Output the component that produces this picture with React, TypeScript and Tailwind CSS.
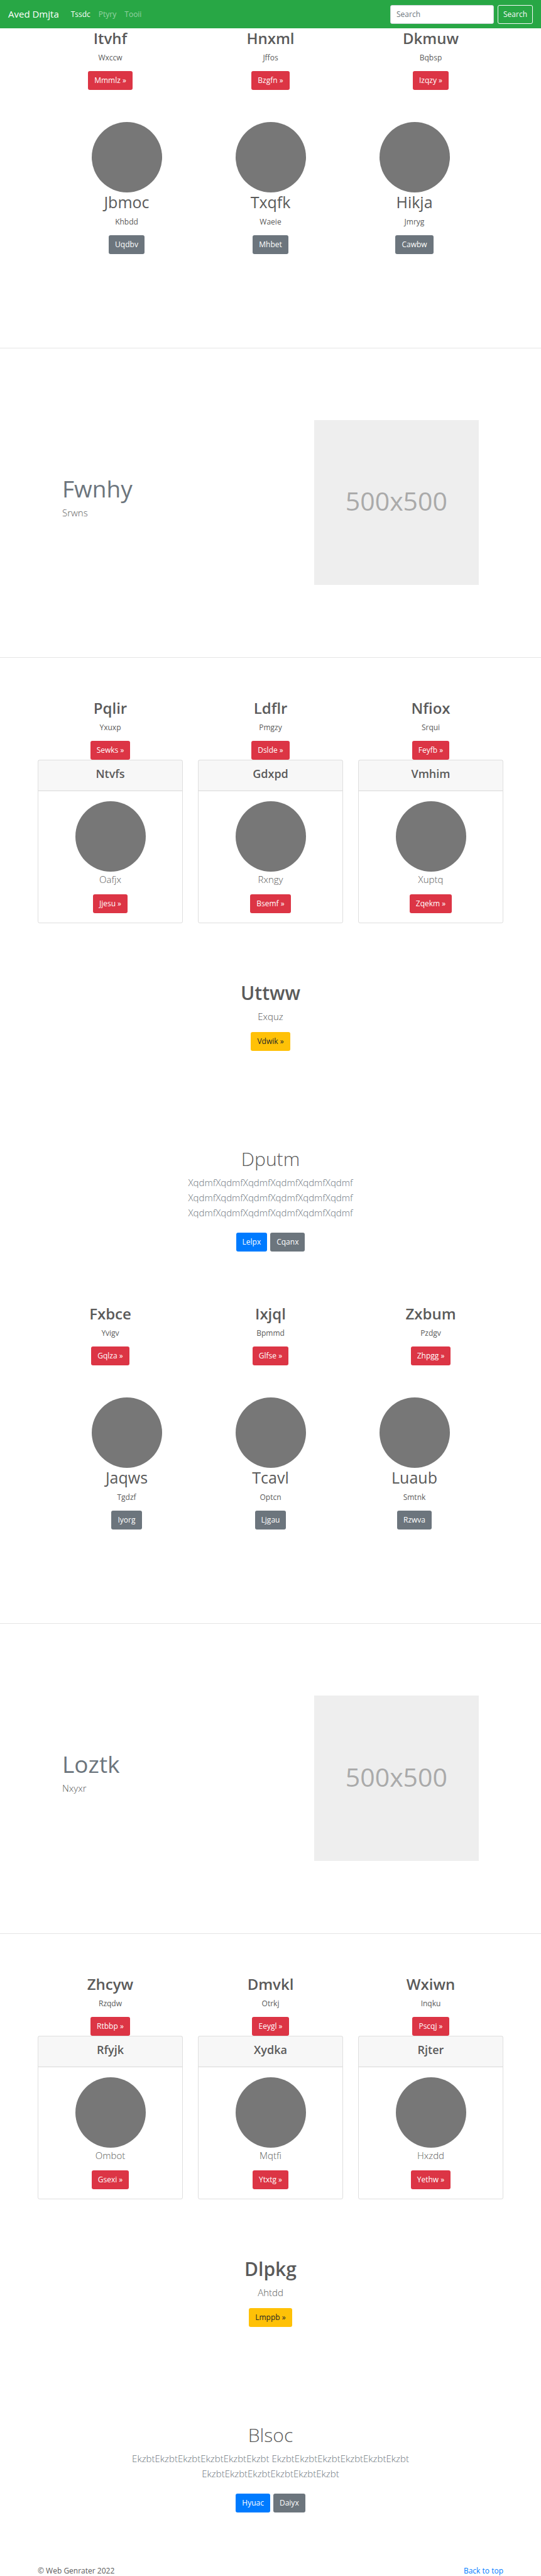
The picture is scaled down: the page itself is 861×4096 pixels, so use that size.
import React from "react";

type Item = { title: string; text: string; action: string };
type Block = {
  marketing: Item[];
  people: Item[];
  feature: { title: string; text: string };
  offers: Item[];
  cards: Item[];
  banner: Item;
  album: { title: string; text: string; primary: string; secondary: string };
};

const repeat = (word: string) => Array(3).fill(word.repeat(6)).join(" ");

const blocks: Block[] = [
  {
    marketing: [
      { title: "Itvhf", text: "Wxccw", action: "Mmmlz" },
      { title: "Hnxml", text: "Jffos", action: "Bzgfn" },
      { title: "Dkmuw", text: "Bqbsp", action: "Izqzy" },
    ],
    people: [
      { title: "Jbmoc", text: "Khbdd", action: "Uqdbv" },
      { title: "Txqfk", text: "Waeie", action: "Mhbet" },
      { title: "Hikja", text: "Jmryg", action: "Cawbw" },
    ],
    feature: { title: "Fwnhy", text: "Srwns" },
    offers: [
      { title: "Pqlir", text: "Yxuxp", action: "Sewks" },
      { title: "Ldflr", text: "Pmgzy", action: "Dslde" },
      { title: "Nfiox", text: "Srqui", action: "Feyfb" },
    ],
    cards: [
      { title: "Ntvfs", text: "Oafjx", action: "Jjesu" },
      { title: "Gdxpd", text: "Rxngy", action: "Bsemf" },
      { title: "Vmhim", text: "Xuptq", action: "Zqekm" },
    ],
    banner: { title: "Uttww", text: "Exquz", action: "Vdwik" },
    album: { title: "Dputm", text: repeat("Xqdmf"), primary: "Lelpx", secondary: "Cqanx" },
  },
  {
    marketing: [
      { title: "Fxbce", text: "Yvigv", action: "Gqlza" },
      { title: "Ixjql", text: "Bpmmd", action: "Glfse" },
      { title: "Zxbum", text: "Pzdgv", action: "Zhpgg" },
    ],
    people: [
      { title: "Jaqws", text: "Tgdzf", action: "Iyorg" },
      { title: "Tcavl", text: "Optcn", action: "Ljgau" },
      { title: "Luaub", text: "Smtnk", action: "Rzwva" },
    ],
    feature: { title: "Loztk", text: "Nxyxr" },
    offers: [
      { title: "Zhcyw", text: "Rzqdw", action: "Rtbbp" },
      { title: "Dmvkl", text: "Otrkj", action: "Eeygl" },
      { title: "Wxiwn", text: "Inqku", action: "Pscqj" },
    ],
    cards: [
      { title: "Rfyjk", text: "Ombot", action: "Gsexi" },
      { title: "Xydka", text: "Mqtfi", action: "Ytxtg" },
      { title: "Rjter", text: "Hxzdd", action: "Yethw" },
    ],
    banner: { title: "Dlpkg", text: "Ahtdd", action: "Lmppb" },
    album: { title: "Blsoc", text: repeat("Ekzbt"), primary: "Hyuac", secondary: "Daiyx" },
  },
];

const tones = {
  danger: "bg-[#dc3545] text-white",
  secondary: "bg-[#6c757d] text-white",
  warning: "bg-[#ffc107] text-[#212529]",
  primary: "bg-[#007bff] text-white",
};

function Button({ tone, children }: { tone: keyof typeof tones; children: React.ReactNode }) {
  return (
    <a href="#" className={`inline-flex h-[30px] items-center rounded-[3px] px-2.5 text-[12px] ${tones[tone]}`}>
      {children}
    </a>
  );
}

function Circle() {
  return <div className="size-[112px] rounded-full bg-[#777]" />;
}

function TextColumns({ items }: { items: Item[] }) {
  return (
    <div className="mx-auto grid max-w-[765px] grid-cols-3 gap-6 px-3">
      {items.map((item) => (
        <div key={item.title} className="flex flex-col items-center text-center">
          <h2 className="mb-1.5 text-[24px] leading-[31px] font-semibold">{item.title}</h2>
          <p className="mb-3 leading-[19px]">{item.text}</p>
          <Button tone="danger">{item.action} »</Button>
        </div>
      ))}
    </div>
  );
}

function People({ items }: { items: Item[] }) {
  return (
    <div className="mx-auto mt-[51px] grid max-w-[687px] grid-cols-3">
      {items.map((item) => (
        <div key={item.title} className="flex flex-col items-center text-center">
          <Circle />
          <h2 className="mb-1.5 text-[25px] leading-[31px] font-normal">{item.title}</h2>
          <p className="mb-3 leading-[19px]">{item.text}</p>
          <Button tone="secondary">{item.action}</Button>
        </div>
      ))}
    </div>
  );
}

function Feature({ title, text }: { title: string; text: string }) {
  return (
    <section className="mt-[149px] border-y border-black/10 pt-[114px] pb-[115px]">
      <div className="mx-auto grid max-w-[687px] grid-cols-12 items-center gap-x-6 px-3">
        <div className="col-span-7">
          <h2 className="mb-1.5 text-[37px] leading-10 font-normal text-[#6c757d]">{title}</h2>
          <p className="mb-3.5 text-[15px] leading-6 font-light">{text}</p>
        </div>
        <div className="col-span-5 flex aspect-square items-center justify-center bg-[#eee] pb-1 text-[41px] text-[#aaa]">
          500x500
        </div>
      </div>
    </section>
  );
}

function Cards({ items }: { items: Item[] }) {
  return (
    <div className="mx-auto grid max-w-[765px] grid-cols-3 gap-6 px-3">
      {items.map((item) => (
        <article key={item.title} className="rounded-[3px] border border-black/[0.125] text-center">
          <header className="border-b border-black/[0.125] bg-black/[0.03] pt-2.5 pb-[15px]">
            <h4 className="text-[18px] leading-[23px] font-semibold">{item.title}</h4>
          </header>
          <div className="flex flex-col items-center pt-4 pb-[15px]">
            <Circle />
            <p className="mb-3 text-[15px] leading-6 font-light">{item.text}</p>
            <Button tone="danger">{item.action} »</Button>
          </div>
        </article>
      ))}
    </div>
  );
}

function Banner({ title, text, action }: Item) {
  return (
    <section className="mt-[92px] flex flex-col items-center text-center">
      <h1 className="mb-1.5 text-[30px] leading-[38px] font-semibold">{title}</h1>
      <p className="mb-[13px] text-[15px] leading-6 font-light">{text}</p>
      <Button tone="warning">{action} »</Button>
    </section>
  );
}

function Album({ title, text, primary, secondary }: Block["album"]) {
  return (
    <section className="mx-auto mt-[153px] mb-[83px] max-w-[510px] text-center">
      <h1 className="mb-1.5 text-[30px] leading-[38px] font-light">{title}</h1>
      <p className="mb-5 text-[15px] leading-6 font-light text-[#6c757d]">{text}</p>
      <div className="flex justify-center gap-[5px]">
        <Button tone="primary">{primary}</Button>
        <Button tone="secondary">{secondary}</Button>
      </div>
    </section>
  );
}

export default function App() {
  return (
    <div className="bg-white font-['Open_Sans','Noto_Sans',sans-serif] text-[12px] text-[#5a5a5a]">
      <nav className="flex h-[45px] items-center bg-[#28a745] px-[13px] text-white">
        <a href="#" className="mr-[19px] text-[15px]">Aved Dmjta</a>
        <div className="flex flex-1 gap-[13px]">
          <a href="#">Tssdc</a>
          <a href="#" className="text-white/50">Ptyry</a>
          <a href="#" className="text-white/50">Tooii</a>
        </div>
        <form className="flex gap-1.5">
          <input
            type="search"
            aria-label="Search"
            placeholder="Search"
            className="h-[30px] w-[165px] rounded-[3px] border border-[#ced4da] bg-white px-[9px] text-[12px] text-[#495057] placeholder:text-[#6c757d]"
          />
          <button type="button" className="h-[30px] rounded-[3px] border border-[#f8f9fa] px-2 text-[12px] text-[#f8f9fa]">
            Search
          </button>
        </form>
      </nav>
      <main>
        {blocks.map((block) => (
          <React.Fragment key={block.feature.title}>
            <TextColumns items={block.marketing} />
            <People items={block.people} />
            <Feature {...block.feature} />
            <div className="mt-16">
              <TextColumns items={block.offers} />
              <Cards items={block.cards} />
            </div>
            <Banner {...block.banner} />
            <Album {...block.album} />
          </React.Fragment>
        ))}
      </main>
      <footer className="mx-auto flex max-w-[765px] justify-between px-3 leading-[19px]">
        <p>© Web Genrater 2022</p>
        <a href="#" className="text-[#007bff]">Back to top</a>
      </footer>
    </div>
  );
}
